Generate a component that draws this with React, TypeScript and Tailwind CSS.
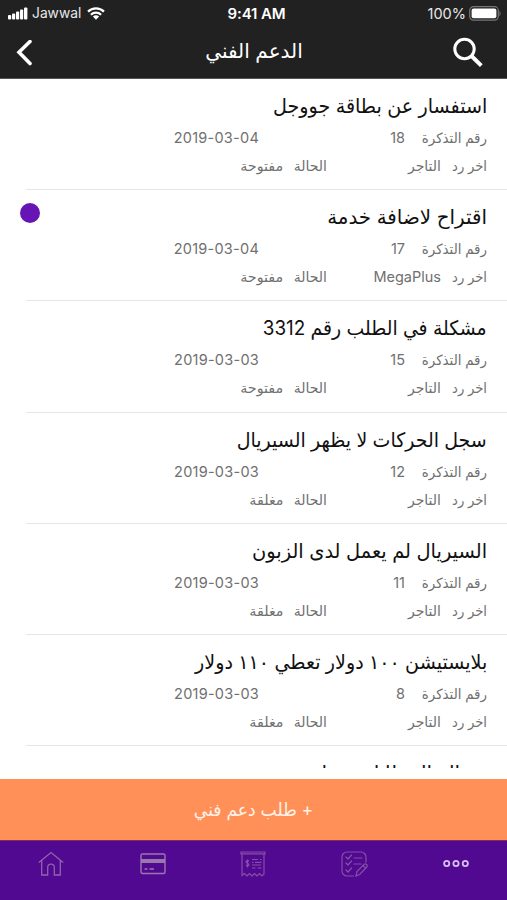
type Ticket = {
  title: string;
  titleClass: string;
  id: string;
  date?: string;
  by?: string;
  status?: string;
  unread?: boolean;
};

const OPEN = 'مفتوحة';
const CLOSED = 'مغلقة';
const MERCHANT = 'التاجر';

const tickets: Ticket[] = [
  { title: 'استفسار عن بطاقة جووجل', titleClass: 'scale-x-[0.955]', id: '18', date: '2019-03-04', by: MERCHANT, status: OPEN },
  { title: 'اقتراح لاضافة خدمة', titleClass: 'scale-x-[0.993]', id: '17', date: '2019-03-04', by: 'MegaPlus', status: OPEN, unread: true },
  { title: 'مشكلة في الطلب رقم 3312', titleClass: 'scale-x-[0.942]', id: '15', date: '2019-03-03', by: MERCHANT, status: OPEN },
  { title: 'سجل الحركات لا يظهر السيريال', titleClass: 'scale-x-[0.948]', id: '12', date: '2019-03-03', by: MERCHANT, status: CLOSED },
  { title: 'السيريال لم يعمل لدى الزبون', titleClass: 'scale-x-[0.971]', id: '11', date: '2019-03-03', by: MERCHANT, status: CLOSED },
  { title: 'بلايستيشن ١٠٠ دولار تعطي ١١٠ دولار', titleClass: 'scale-x-[0.954]', id: '8', date: '2019-03-03', by: MERCHANT, status: CLOSED },
  { title: 'رسالة الخطا لم تعمل', titleClass: '', id: '7' },
];

function StatusBar() {
  return (
    <div dir="ltr" className="grid h-[27px] grid-cols-3 items-center pl-2 pr-[6px] text-[14.5px] leading-[27px] text-[#e8e8e8]">
      <div className="flex items-center">
        <svg width="20" height="13" viewBox="0 0 20 13" fill="white">
          <rect x="0" y="8" width="3.2" height="4.5" rx="1" />
          <rect x="4" y="6.5" width="3.2" height="6" rx="1" />
          <rect x="8" y="4.5" width="3.2" height="8" rx="1" />
          <rect x="12" y="2.5" width="3.2" height="10" rx="1" />
          <rect x="16" y="0.5" width="3.4" height="12" rx="1" />
        </svg>
        <span className="ml-1 text-[13.800px]">Jawwal</span>
        <svg className="ml-[6px]" width="18" height="13" viewBox="0 0 18 13" fill="none" stroke="white" strokeWidth="2.2">
          <path d="M1 4.6a11.4 11.4 0 0 1 16 0" />
          <path d="M3.9 7.7a7.2 7.2 0 0 1 10.2 0" />
          <path d="M5.9 9.5a4.4 4.4 0 0 1 6.2 0L9 12.7z" fill="white" stroke="none" />
        </svg>
      </div>
      <div className="pl-[4px] text-center text-[15px] font-semibold tracking-[-0.1px] text-white">9:41 AM</div>
      <div className="flex items-center justify-end">
        <span>100%</span>
        <svg className="ml-[3px]" width="32" height="15" viewBox="0 0 32 15">
          <rect x="0.7" y="0.7" width="28.6" height="13.4" rx="3.8" fill="none" stroke="#777" strokeWidth="1.2" />
          <rect x="2.6" y="2.6" width="24.8" height="9.6" rx="2" fill="white" />
          <path d="M30.5 5v5c1.4-.5 1.4-4.500 0-5z" fill="#777" />
        </svg>
      </div>
    </div>
  );
}

function Header() {
  return (
    <header className="h-[79px] shrink-0 border-b border-[#555] bg-[#212121]">
      <StatusBar />
      <div dir="ltr" className="grid h-[51px] grid-cols-3 items-center pl-4 pr-[23px]">
        <svg width="17" height="26" viewBox="0 0 17 26" fill="none" stroke="white" strokeWidth="3.6" strokeLinecap="round">
          <path d="M14 1.500L3 12.300L14 23.500" />
        </svg>
        <h1 dir="rtl" className="pb-[3px] pl-[8px] text-center text-[20px] text-white">
          الدعم الفني
        </h1>
        <svg className="justify-self-end" width="32" height="32" viewBox="0 0 32 32" fill="none" stroke="white">
          <circle cx="12.500" cy="12" r="9.700" strokeWidth="3" />
          <path d="M19.500 19L29.300 28.600" strokeWidth="4" />
        </svg>
      </div>
    </header>
  );
}

function TicketRow({ t }: { t: Ticket }) {
  return (
    <li className="flex h-[111.200px] shrink-0 text-[#707070]">
      <div className="ml-[26px] flex min-w-0 flex-1 flex-col border-b border-[#e6e6e6] pr-5 pt-[11px]">
        <div className="flex h-[34px] items-start justify-between">
          <h2 className={`origin-right whitespace-nowrap text-[20px] leading-8 text-[#111] ${t.titleClass}`}>{t.title}</h2>
          {t.unread && <span className="-ml-[6px] mt-[2px] size-5 shrink-0 rounded-full bg-[#6714b4]" />}
        </div>
        {t.date && (
          <>
            <div className="flex h-7 items-center whitespace-nowrap text-[14px] leading-7">
              <span className="w-[82px] origin-right scale-x-[0.957]">رقم التذكرة</span>
              <span className="w-[146px] text-[14.5px]">{t.id}</span>
              <span dir="ltr" className="text-[14.500px] tracking-[0.25px]">{t.date}</span>
            </div>
            <div className="flex h-7 items-center whitespace-nowrap text-[14px] leading-7">
              <span className="w-[46px] origin-right scale-x-[0.94]">اخر رد</span>
              <span className={t.by === MERCHANT ? 'w-[114px]' : 'w-[114px] text-[14.5px]'}>{t.by}</span>
              <span className="w-[44px]">الحالة</span>
              <span className="origin-right scale-x-[1.02]">{t.status}</span>
            </div>
          </>
        )}
      </div>
    </li>
  );
}

function TabBar() {
  return (
    <nav dir="ltr" className="grid h-[60px] shrink-0 grid-cols-5 justify-items-center border-t border-[#7d2b60] bg-[#510991] pt-[10px]">
      <svg width="26" height="26" viewBox="0 0 26 26" fill="none" stroke="#9163a9" strokeWidth="1.300">
        <path d="M.8 11.500L13 1.500l12.200 10M3.700 9.500v14.500h6v-7.500a3.300 3.300 0 0 1 6.600 0V24h6V9.500" />
      </svg>
      <svg className="ml-px" width="26" height="26" viewBox="0 0 26 26" fill="none" stroke="#9b78ac" strokeWidth="1.400">
        <rect x="1" y="3" width="24" height="19.500" rx="1.500" />
        <rect x="1" y="8" width="24" height="4" fill="#9b78ac" stroke="none" />
        <path d="M4.500 18h3M9.500 18h4.500" />
      </svg>
      <svg width="26" height="26" viewBox="0 0 26 26" fill="none" stroke="#874fa5" strokeWidth="1.200">
        <path d="M1 1h24v1.800H1zM2 3v21.500l2.500-2 2.500 2.500 2.500-2.500L12 25l2.500-2.500L17 25l2.500-2.500L22 25l2-2V3" />
        <path d="M12 8.500h6M20 8.500h1.500M12 11.300h1.500M15 11.300h6.500M12 14h9M12 17h3.500M17.500 17h4" />
        <path d="M9 10.300c-.8-1-3-.8-3 .6 0 1.600 3 1 3 2.700 0 1.500-2.200 1.700-3.200.5M7.500 8.500v8" />
      </svg>
      <svg width="27" height="26" viewBox="0 0 27 26" fill="none" stroke="#8550a6" strokeWidth="1.200" strokeLinecap="round">
        <path d="M12.500 25H6a5 5 0 0 1-5-5V6a5 5 0 0 1 5-5h14a5 5 0 0 1 5 5v5M5 6l2 2 3.500-4M5 12l2 2 3.500-4M5 19l2 2 3.500-4M13 7h8M13 13h7M15 25l1-4.500 7.200-7.200c1.500-1.300 4 1 2.600 2.700L18.600 23.500zM22 14.500l2.700 2.700" />
      </svg>
      <svg width="28" height="26" viewBox="0 0 28 26" fill="none" stroke="#d8bdf0" strokeWidth="1.800">
        <circle cx="4.700" cy="12.500" r="2.600" />
        <circle cx="14" cy="12.500" r="2.600" />
        <circle cx="23.300" cy="12.500" r="2.600" />
      </svg>
    </nav>
  );
}

export default function App() {
  return (
    <div dir="rtl" className="flex h-[900px] w-[507px] flex-col overflow-hidden bg-white font-[Inter,'DejaVu_Sans',sans-serif]">
      <Header />
      <main className="min-h-0 flex-1 pb-[11px]">
        <ul className="flex h-full flex-col overflow-hidden">
          {tickets.map((t) => (
            <TicketRow key={t.id} t={t} />
          ))}
        </ul>
      </main>
      <button className="h-[61px] shrink-0 bg-[#ff9058] text-center text-[18px] text-[#fff3ea]">
        <span className="inline-block scale-x-[0.955]">+ طلب دعم فني</span>
      </button>
      <TabBar />
    </div>
  );
}
